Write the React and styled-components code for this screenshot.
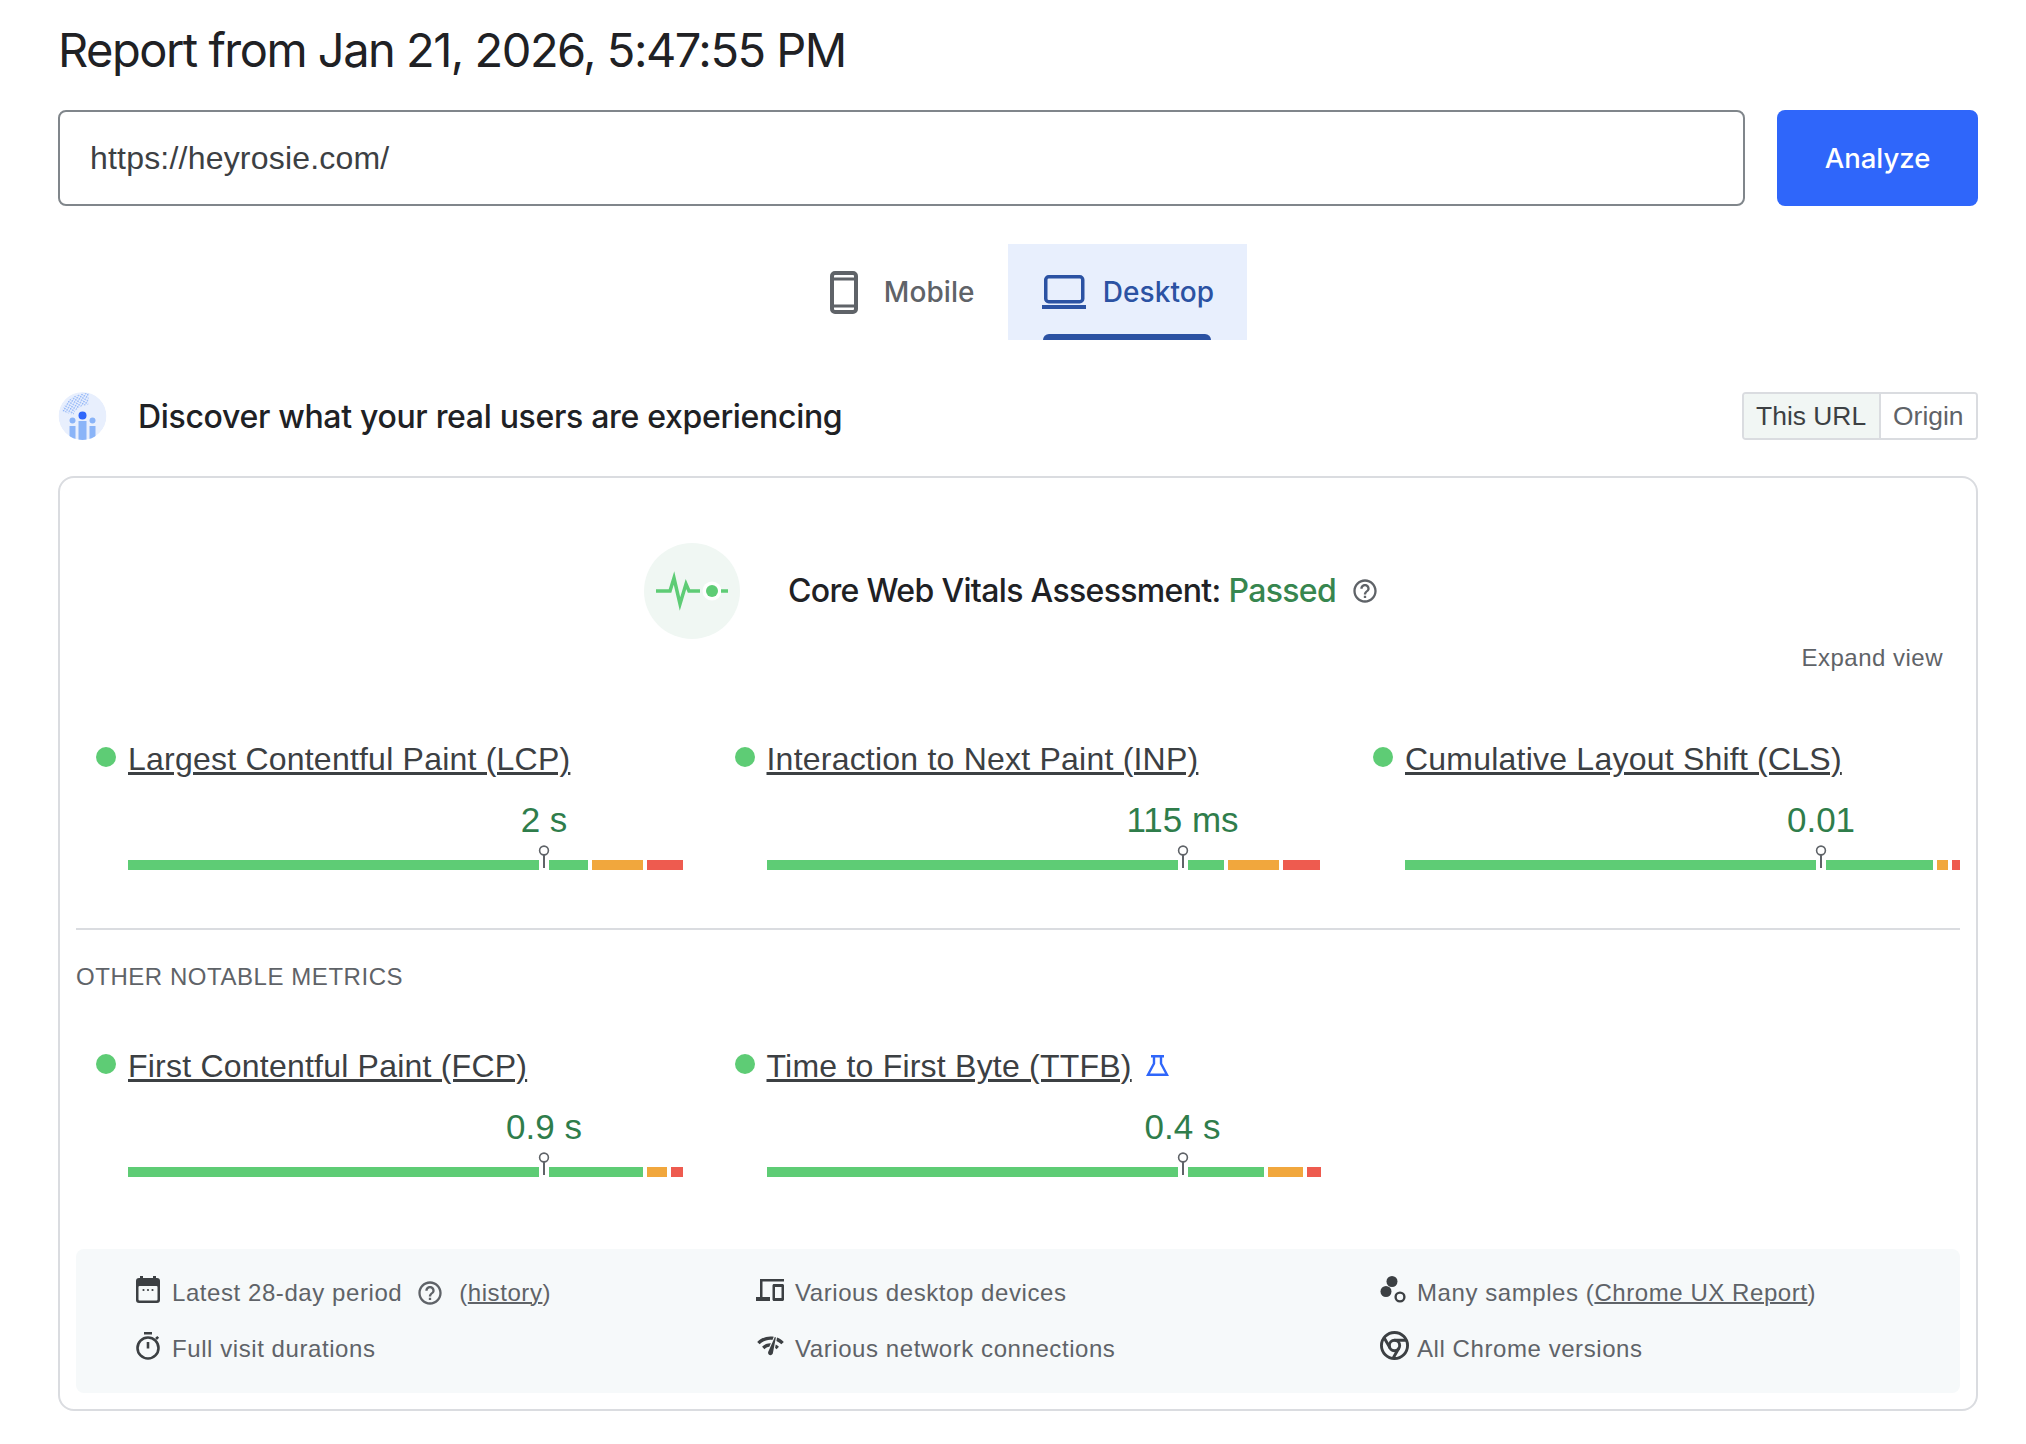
import React from 'react';
import styled, { createGlobalStyle } from 'styled-components';

const GlobalStyle = createGlobalStyle`
  html, body { margin: 0; padding: 0; background: #fff; }
  body { font-family: "Liberation Sans", Arial, sans-serif; color: #202124; }
  * { box-sizing: border-box; }
`;

const HEAD_FONT = `Inter, Roboto, "Liberation Sans", sans-serif`;
const GREEN = '#5ecc75';
const ORANGE = '#f1a73d';
const RED = '#ee5b4f';

const Page = styled.div`
  width: 2026px;
  padding: 0 48px 35px 58px;
`;

const Title = styled.h1`
  margin: 0 0 10px;
  height: 100px;
  font: 400 47px/100px ${HEAD_FONT};
  letter-spacing: -1.5px;
  color: #202124;
  white-space: nowrap;
`;

const SearchRow = styled.form`
  display: flex;
  gap: 32px;
  height: 96px;
`;

const UrlInput = styled.div`
  flex: 1;
  display: flex;
  align-items: center;
  padding: 1px 0 0 30px;
  border: 2px solid #80868b;
  border-radius: 8px;
  font-size: 32px;
  letter-spacing: 0.2px;
  color: #3c4043;
`;

const AnalyzeButton = styled.button`
  width: 201px;
  border: 0;
  border-radius: 8px;
  background: #2f66fa;
  color: #fff;
  font: 500 27.5px ${HEAD_FONT};
`;

const Tabs = styled.div`
  display: flex;
  justify-content: center;
  height: 96px;
  margin-top: 38px;
  padding-left: 7px;
`;

const Tab = styled.div`
  position: relative;
  display: flex;
  align-items: center;
  gap: ${p => (p.$active ? '17px' : '26px')};
  padding: 0 33px 0 34px;
  background: ${p => (p.$active ? '#e8effd' : 'transparent')};
  color: ${p => (p.$active ? '#2b52a3' : '#5f6368')};
  font: 500 28px ${HEAD_FONT};
  letter-spacing: 0.1px;
`;

const TabMark = styled.span`
  position: absolute;
  left: 35px;
  right: 36px;
  bottom: 0;
  height: 6px;
  border-radius: 6px 6px 0 0;
  background: #2b52a3;
`;

const DiscoverRow = styled.div`
  display: flex;
  align-items: center;
  height: 48px;
  margin-top: 52px;
`;

const DiscoverTitle = styled.h2`
  flex: 1;
  margin: 0 0 0 31px;
  font: 500 32px ${HEAD_FONT};
  letter-spacing: -0.32px;
  color: #202124;
`;

const Toggle = styled.div`
  display: flex;
  height: 48px;
  border: 2px solid #dadce0;
  border-radius: 4px;
  overflow: hidden;
`;

const ToggleItem = styled.div`
  display: flex;
  align-items: center;
  padding: 0 12.5px;
  font-size: 26.4px;
  background: ${p => (p.$on ? '#f1f6f4' : '#fff')};
  color: ${p => (p.$on ? '#3c4043' : '#5f6368')};
  & + & { border-left: 2px solid #dadce0; }
`;

const Card = styled.section`
  margin-top: 36px;
  padding: 65px 16px 16px;
  border: 2px solid #dadce0;
  border-radius: 16px;
`;

const Assessment = styled.div`
  display: flex;
  align-items: center;
  height: 96px;
  padding-left: 568px;
`;

const PulseBadge = styled.div`
  width: 96px;
  height: 96px;
  margin-right: 48px;
  border-radius: 50%;
  background: #f0f7f3;
`;

const AssessmentText = styled.div`
  padding-bottom: 2px;
  font: 500 32px ${HEAD_FONT};
  letter-spacing: -0.67px;
  color: #202124;
`;

const Passed = styled.span`
  color: #37864f;
`;

const HelpWrap = styled.span`
  display: flex;
  margin-left: 15px;
`;

const ExpandRow = styled.div`
  height: 30px;
  margin-top: 4px;
  padding-right: 17px;
  text-align: right;
  font-size: 24px;
  line-height: 30px;
  letter-spacing: 0.5px;
  color: #5f6368;
`;

const MetricGrid = styled.div`
  display: grid;
  grid-template-columns: repeat(3, 607px);
  column-gap: 31.5px;
  margin-top: ${p => p.$top}px;
`;

const MetricHead = styled.div`
  display: flex;
  align-items: flex-start;
  padding-left: 20px;
  height: 40px;
`;

const Dot = styled.span`
  flex: none;
  width: 20px;
  height: 20px;
  margin: 8px 12px 0 0;
  border-radius: 50%;
  background: ${GREEN};
`;

const MetricName = styled.a`
  font-size: 32px;
  line-height: 40px;
  letter-spacing: 0.22px;
  color: #3c4043;
  text-decoration: underline;
  text-decoration-thickness: 3px;
  text-underline-offset: 2px;
  white-space: nowrap;
`;

const Flask = styled.svg`
  margin: 9px 0 0 14px;
`;

const MetricBody = styled.div`
  margin-left: 52px;
  width: 555px;
`;

const MetricValue = styled.div`
  width: fit-content;
  margin: 19px 0 3px ${p => p.$at}px;
  transform: translateX(-50%);
  font-size: 35px;
  line-height: 44px;
  color: #2f7d4b;
  white-space: nowrap;
`;

const Track = styled.div`
  position: relative;
  display: flex;
  height: 25px;
  padding-top: 15px;
`;

const Segment = styled.span`
  height: 10px;
  width: ${p => p.$w}px;
  margin-right: ${p => p.$gap}px;
  background: ${p => p.$color};
`;

const Pin = styled.svg`
  position: absolute;
  top: 0;
  left: ${p => p.$at - 7}px;
`;

const Rule = styled.hr`
  height: 2px;
  margin: 58px 0 0;
  border: 0;
  background: #dadce0;
`;

const SectionLabel = styled.div`
  height: 30px;
  margin-top: 32px;
  font-size: 24px;
  line-height: 30px;
  letter-spacing: 0.55px;
  color: #5f6368;
`;

const Footer = styled.div`
  display: grid;
  grid-template-columns: 620px 624px 1fr;
  grid-auto-rows: 32px;
  row-gap: 24px;
  margin-top: 72px;
  padding: 28px 0 28px 60px;
  border-radius: 8px;
  background: #f6f9fa;
`;

const FooterItem = styled.div`
  display: flex;
  align-items: center;
  font-size: 24px;
  letter-spacing: 0.57px;
  color: #5f6368;
  white-space: nowrap;
  & a { color: inherit; text-decoration: underline; text-decoration-thickness: 2px; }
`;

const IconSlot = styled.span`
  display: flex;
  align-items: center;
  flex: none;
  width: ${p => p.$w}px;
  height: 32px;
  padding-bottom: 7px;
`;

const FootHelp = styled.span`
  display: flex;
  margin: 0 15px 0 14px;
`;

const HelpIcon = ({ size, color }) => (
  <svg width={size} height={size} viewBox="0 0 24 24" fill={color}>
    <path d="M11 18h2v-2h-2v2zm1-16C6.48 2 2 6.48 2 12s4.48 10 10 10 10-4.48 10-10S17.52 2 12 2zm0 18c-4.41 0-8-3.59-8-8s3.59-8 8-8 8 3.59 8 8-3.59 8-8 8zm0-14c-2.21 0-4 1.79-4 4h2c0-1.1.9-2 2-2s2 .9 2 2c0 2-3 1.75-3 5h2c0-2.25 3-2.5 3-5 0-2.21-1.79-4-4-4z" />
  </svg>
);

const PhoneIcon = () => (
  <svg width="28" height="43" viewBox="0 0 28 43" fill="none" stroke="#5f6368" strokeWidth="4">
    <rect x="2" y="2" width="24" height="39" rx="3" />
    <path d="M2 8h24M2 35h24" strokeWidth="3" />
  </svg>
);

const LaptopIcon = () => (
  <svg width="44" height="34" viewBox="0 0 44 34" fill="none">
    <rect x="3.75" y="1.75" width="37" height="25" rx="3" stroke="#2b52a3" strokeWidth="3.5" />
    <rect x="0" y="30" width="44" height="4" fill="#2b52a3" />
  </svg>
);

const RumIcon = () => (
  <svg width="49" height="48" viewBox="0 0 48 48">
    <defs>
      <pattern id="stipple" width="2.6" height="2.6" patternUnits="userSpaceOnUse" patternTransform="rotate(30)">
        <rect width="1.5" height="1.5" fill="#8fb4f7" />
      </pattern>
      <clipPath id="rumClip"><circle cx="24" cy="24" r="24" /></clipPath>
    </defs>
    <g clipPath="url(#rumClip)">
      <circle cx="24" cy="24" r="24" fill="#e8effd" />
      <path d="M9 21A21 21 0 0 1 30 7" fill="none" stroke="url(#stipple)" strokeWidth="12" />
      <rect x="20" y="29" width="8" height="20" fill="#8ab4f8" />
      <rect x="11" y="34" width="6" height="15" fill="#8ab4f8" />
      <rect x="31" y="34" width="6" height="15" fill="#8ab4f8" />
      <circle cx="14" cy="28.5" r="3" fill="#8ab4f8" />
      <circle cx="34" cy="28.5" r="3" fill="#8ab4f8" />
      <circle cx="24" cy="23.5" r="4" fill="#2f66fa" />
    </g>
  </svg>
);

const PulseIcon = () => (
  <svg width="96" height="96" viewBox="0 0 96 96" fill="none">
    <path d="M12 48h14l4-13 6 26 6-20 3 7h11" stroke={GREEN} strokeWidth="3.5" strokeLinejoin="miter" />
    <circle cx="68" cy="48" r="9.5" fill="#fff" />
    <circle cx="68" cy="48" r="6" fill={GREEN} />
    <path d="M77 48h7" stroke={GREEN} strokeWidth="3.5" />
  </svg>
);

const FlaskIcon = () => (
  <Flask width="23" height="21" viewBox="0 0 23 21" fill="none" stroke="#2f66fa" strokeWidth="2.4">
    <path d="M5 1.2h13M8 1.2v7.3L2 19.8h19L15 8.5V1.2" />
  </Flask>
);

const CalendarIcon = () => (
  <svg width="24" height="27" viewBox="0 0 24 27">
    <rect y="2" width="24" height="25" rx="3" fill="#3c4043" />
    <rect x="4" width="3" height="4" fill="#3c4043" />
    <rect x="17" width="3" height="4" fill="#3c4043" />
    <rect x="2.5" y="10" width="19" height="14.5" rx="1" fill="#f6f9fa" />
    <circle cx="7.5" cy="14" r="1.1" fill="#3c4043" />
    <circle cx="12" cy="14" r="1.1" fill="#3c4043" />
    <circle cx="16.5" cy="14" r="1.1" fill="#3c4043" />
  </svg>
);

const TimerIcon = () => (
  <svg width="24" height="28" viewBox="0 0 24 28" fill="none" stroke="#3c4043" strokeWidth="2.6">
    <circle cx="12" cy="16" r="10.5" />
    <path d="M8 1.3h8M12 10v6.5M20 7l2.2-2.2" />
  </svg>
);

const DevicesIcon = () => (
  <svg width="28" height="22" viewBox="0 0 28 22" fill="#3c4043">
    <path d="M4 0h24v2.6H6.5V18H14v4H0v-4h4z" />
    <path fillRule="evenodd" d="M18 5h8.5c.8 0 1.5.7 1.5 1.5v14c0 .8-.7 1.5-1.5 1.5H18c-.8 0-1.5-.7-1.5-1.5v-14c0-.8.7-1.5 1.5-1.5zm1 3v11h6.5V8z" />
  </svg>
);

const NetworkIcon = () => (
  <svg width="29" height="29" viewBox="0 0 24 24" fill="#3c4043">
    <path d="M15.9 5c-.17 0-.32.09-.41.23l-.07.15-5.18 11.65c-.16.29-.26.61-.26.96 0 1.11.9 2.01 2.01 2.01.96 0 1.77-.68 1.96-1.59l.01-.03L16.4 5.5c0-.28-.22-.5-.5-.5zM1 9l2 2c2.88-2.88 6.79-4.07 10.53-3.58l1.2-2.7C9.89 3.84 4.74 5.27 1 9zm20 2l2-2c-1.64-1.64-3.55-2.82-5.59-3.57l-.53 2.82c1.5.62 2.9 1.53 4.12 2.75zm-4 4l2-2c-.8-.8-1.7-1.42-2.66-1.89l-.55 2.92c.42.27.83.59 1.21.97zM5 13l2 2c1.13-1.13 2.56-1.79 4.03-2l1.28-2.88c-2.63-.08-5.3.87-7.31 2.88z" />
  </svg>
);

const SamplesIcon = () => (
  <svg width="26" height="27" viewBox="0 0 26 27">
    <circle cx="12" cy="5.5" r="5.5" fill="#3c4043" />
    <circle cx="6" cy="15.5" r="5.5" fill="#3c4043" />
    <circle cx="20" cy="21" r="4.4" fill="none" stroke="#3c4043" strokeWidth="2.4" />
  </svg>
);

const ChromeIcon = () => (
  <svg width="29" height="29" viewBox="0 0 28 28" fill="none" stroke="#3c4043" strokeWidth="2.8">
    <circle cx="14" cy="14" r="12.6" />
    <circle cx="14" cy="14" r="5" />
    <path d="M14 9h12M18.3 16.5 12.3 26.8M9.7 16.5 3.7 6" />
  </svg>
);

const MarkerPin = ({ at }) => (
  <Pin $at={at} width="14" height="24" viewBox="0 0 14 24" fill="none" stroke="#5f6368">
    <circle cx="7" cy="5.5" r="4.4" fill="#fff" strokeWidth="1.6" />
    <path d="M7 10v13" strokeWidth="2" />
  </Pin>
);

const Metric = ({ name, value, at = 416, segs, icon }) => (
  <div>
    <MetricHead>
      <Dot />
      <MetricName>{name}</MetricName>
      {icon}
    </MetricHead>
    <MetricBody>
      <MetricValue $at={at}>{value}</MetricValue>
      <Track>
        <Segment $w={411} $gap={10} $color={GREEN} />
        <Segment $w={segs[0]} $gap={4} $color={GREEN} />
        <Segment $w={segs[1]} $gap={4} $color={ORANGE} />
        <Segment $w={segs[2]} $gap={0} $color={RED} />
        <MarkerPin at={at} />
      </Track>
    </MetricBody>
  </div>
);

export default function App() {
  return (
    <Page>
      <GlobalStyle />
      <Title>Report from Jan 21, 2026, 5:47:55 PM</Title>
      <SearchRow>
        <UrlInput>https://heyrosie.com/</UrlInput>
        <AnalyzeButton type="button">Analyze</AnalyzeButton>
      </SearchRow>
      <Tabs>
        <Tab><PhoneIcon />Mobile</Tab>
        <Tab $active><LaptopIcon />Desktop<TabMark /></Tab>
      </Tabs>
      <DiscoverRow>
        <RumIcon />
        <DiscoverTitle>Discover what your real users are experiencing</DiscoverTitle>
        <Toggle>
          <ToggleItem $on>This URL</ToggleItem>
          <ToggleItem>Origin</ToggleItem>
        </Toggle>
      </DiscoverRow>
      <Card>
        <Assessment>
          <PulseBadge><PulseIcon /></PulseBadge>
          <AssessmentText>Core Web Vitals Assessment: <Passed>Passed</Passed></AssessmentText>
          <HelpWrap><HelpIcon size={28} color="#5f6368" /></HelpWrap>
        </Assessment>
        <ExpandRow>Expand view</ExpandRow>
        <MetricGrid $top={66}>
          <Metric name="Largest Contentful Paint (LCP)" value="2 s" segs={[39, 51, 36]} />
          <Metric name="Interaction to Next Paint (INP)" value="115 ms" segs={[36, 51, 37]} />
          <Metric name="Cumulative Layout Shift (CLS)" value="0.01" segs={[107, 11, 8]} />
        </MetricGrid>
        <Rule />
        <SectionLabel>OTHER NOTABLE METRICS</SectionLabel>
        <MetricGrid $top={54}>
          <Metric name="First Contentful Paint (FCP)" value="0.9 s" segs={[94, 20, 12]} />
          <Metric name="Time to First Byte (TTFB)" value="0.4 s" segs={[76, 35, 14]} icon={<FlaskIcon />} />
        </MetricGrid>
        <Footer>
          <FooterItem>
            <IconSlot $w={36}><CalendarIcon /></IconSlot>
            Latest 28-day period
            <FootHelp><HelpIcon size={28} color="#5f6368" /></FootHelp>
            (<a>history</a>)
          </FooterItem>
          <FooterItem><IconSlot $w={39}><DevicesIcon /></IconSlot>Various desktop devices</FooterItem>
          <FooterItem><IconSlot $w={37}><SamplesIcon /></IconSlot><span>Many samples (<a>Chrome UX Report</a>)</span></FooterItem>
          <FooterItem><IconSlot $w={36}><TimerIcon /></IconSlot>Full visit durations</FooterItem>
          <FooterItem><IconSlot $w={39}><NetworkIcon /></IconSlot>Various network connections</FooterItem>
          <FooterItem><IconSlot $w={37}><ChromeIcon /></IconSlot>All Chrome versions</FooterItem>
        </Footer>
      </Card>
    </Page>
  );
}
